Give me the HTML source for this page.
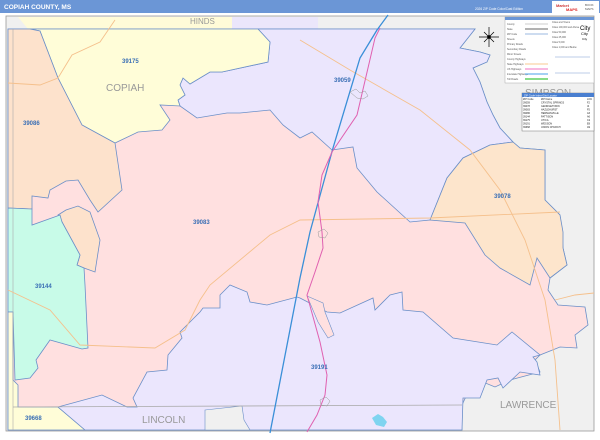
<!DOCTYPE html>
<html><head><meta charset="utf-8"><style>
html,body{margin:0;padding:0;background:#fff;}
body{width:600px;height:435px;overflow:hidden;font-family:"Liberation Sans",sans-serif;}
</style></head><body>
<svg width="600" height="435" viewBox="0 0 600 435" xmlns="http://www.w3.org/2000/svg" font-family="Liberation Sans, sans-serif">
<rect width="600" height="435" fill="#fff"/>
<rect x="0" y="0" width="600" height="13" fill="#6b96d6"/>
<text x="4" y="9" font-size="6.5" font-weight="bold" fill="#fff">COPIAH COUNTY, MS</text>
<text x="475" y="10" font-size="3.2" fill="#fff">2026 ZIP Code Color/Cast Edition</text>
<rect x="552" y="1" width="47" height="12" fill="#fff"/>
<text x="556" y="7" font-size="4" fill="#c33" font-weight="bold">Market</text>
<text x="566" y="11" font-size="4" fill="#d22" font-weight="bold">MAPS</text>
<text x="585" y="6" font-size="3" fill="#555">BOOK</text>
<text x="585" y="10" font-size="3" fill="#555">MAPS</text>
<rect x="6" y="16" width="588" height="415" fill="#f0f0f0" stroke="#999" stroke-width="0.8"/>
<polygon points="18,17 232,17 232,29 28,29" fill="#fffbd8"/>
<polygon points="232,17 318,17 318,29 232,29" fill="#ebe6fb"/>
<polygon fill="#ffe0e0" stroke="#6b8fc8" stroke-width="0.8" points="8,29 475,29 460,48 480,52 490,55 487,62 473,68 480,82 487,102 493,115 500,128 513,142 520,148 545,150 545,200 560,215 563,248 567,265 550,278 548,290 558,305 585,307 588,325 575,335 577,348 560,347 540,355 535,360 540,372 510,380 495,387 483,382 470,388 462,405 462,430 8,430"/>
<polygon fill="#ebe6fd" stroke="#6b8fc8" stroke-width="0.8" points="258,29 475,29 460,48 480,52 490,55 487,62 473,68 480,82 487,102 493,115 500,128 513,142 490,145 463,158 447,178 430,220 410,222 377,192 357,168 353,147 332,150 312,132 300,138 283,125 270,110 240,113 227,113 197,118 180,106 178,100 185,95 180,85 183,78 190,84 210,72 222,72 268,62 270,42"/>
<polygon fill="#fde5cc" stroke="#6b8fc8" stroke-width="0.8" points="513,142 520,148 545,150 545,200 560,215 563,232 563,248 567,265 550,278 537,258 530,285 500,268 485,255 465,223 430,220 447,178 463,158 490,145"/>
<polygon fill="#fffdd8" stroke="#6b8fc8" stroke-width="0.8" points="30,29 258,29 270,42 268,62 222,72 210,72 190,84 183,78 180,85 185,95 178,100 180,106 160,105 170,120 162,130 138,132 115,143 82,125 58,78 40,31"/>
<polygon fill="#fde2cc" stroke="#6b8fc8" stroke-width="0.8" points="8,29 30,29 40,31 58,78 82,125 115,143 122,190 98,212 90,200 78,180 66,181 50,190 48,198 32,196 32,209 8,208"/>
<polygon fill="#fde2cc" stroke="#6b8fc8" stroke-width="0.8" points="58,215 66,210 78,206 90,212 100,240 95,272 84,268 77,265 80,255 62,222"/>
<polygon fill="#c8fbe8" stroke="#6b8fc8" stroke-width="0.8" points="8,208 32,209 32,225 60,215 62,222 80,255 77,265 84,268 85,285 88,348 82,349 50,340 36,360 38,368 30,378 15,380 13,312 8,312"/>
<polygon fill="#fffdd8" stroke="#6b8fc8" stroke-width="0.8" points="8,312 13,312 13,380 18,385 18,407 58,407 85,430 8,430"/>
<polygon fill="#ebe6fd" stroke="#6b8fc8" stroke-width="0.8" points="58,407 102,395 127,407 137,407 133,398 147,372 167,370 168,355 182,338 180,332 200,312 203,308 220,308 220,295 230,285 247,292 250,302 267,305 297,297 300,298 327,312 340,313 373,298 375,310 390,295 402,292 403,310 423,312 453,338 497,345 512,332 540,355 533,357 537,362 540,375 520,372 503,388 498,378 487,380 480,398 463,398 462,430 85,430"/>
<polygon fill="#ffe0e0" stroke="#6b8fc8" stroke-width="0.6" points="307,296 323,303 325,312 334,335 328,338 318,322"/>
<polygon fill="#f0f0f0" stroke="#6b8fc8" stroke-width="0.6" points="205,410 242,406 244,420 250,430 205,430"/>
<line x1="13" y1="407" x2="462" y2="405" stroke="#aaa" stroke-width="0.8"/>
<line x1="13" y1="29" x2="13" y2="430" stroke="#aaa" stroke-width="0.6"/>
<path d="M372,418 l6,-4 5,3 4,5 -3,5 -8,-2z" fill="#7fd4f0"/>
<g fill="none" stroke="#f5c08c" stroke-width="0.9">
<path d="M8,83 L40,85 58,78 72,55 100,42 115,20"/>
<path d="M300,40 L350,70 420,110 470,150 500,190 525,240 545,300 555,360 560,430"/>
<path d="M8,290 L50,310 80,345 155,348 185,330 200,300 210,285 270,235 300,220 430,218 560,212"/>
<path d="M555,300 L575,295 594,293"/>
</g>
<path d="M388,15 L377,30 360,58 333,148 310,232 300,278 270,433" fill="none" stroke="#3a8fd8" stroke-width="1.3"/>
<path d="M380,28 L375,38 357,115 332,152 322,175 318,202 322,232 323,248 315,272 307,295 320,342 327,375 325,395 317,415 307,432" fill="none" stroke="#e060b0" stroke-width="1"/>
<g fill="none" stroke="#999" stroke-width="0.5">
<path d="M350,92 l6,-3 4,4 5,-2 3,5 -5,3 -6,-1z"/>
<path d="M318,232 l6,-3 4,4 -3,5 -6,-1z"/>
<path d="M320,400 l6,-3 4,4 -3,5 -6,-1z"/>
</g>
<g font-size="6" font-weight="bold" fill="#3a6fb5">
<text x="122" y="63">39175</text>
<text x="23" y="125">39086</text>
<text x="193" y="224">39083</text>
<text x="334" y="82">39059</text>
<text x="494" y="198">39078</text>
<text x="35" y="288">39144</text>
<text x="311" y="369">39191</text>
<text x="25" y="420">39668</text>
</g>
<g fill="#999">
<text x="190" y="24" font-size="8">HINDS</text>
<text x="106" y="91" font-size="10">COPIAH</text>
<text x="142" y="423" font-size="10">LINCOLN</text>
<text x="500" y="408" font-size="10">LAWRENCE</text>
<text x="525" y="96" font-size="10">SIMPSON</text>
</g>
<g transform="translate(489,37)" stroke="#000" stroke-width="0.7">
<line x1="0" y1="-10" x2="0" y2="10"/><line x1="-10" y1="0" x2="10" y2="0"/>
<line x1="-5" y1="-5" x2="5" y2="5"/><line x1="-5" y1="5" x2="5" y2="-5"/>
<circle r="1.5" fill="#000"/>
</g>
<rect x="505" y="17" width="89" height="66" fill="#fff" stroke="#aaa" stroke-width="0.5"/>
<rect x="505" y="17" width="89" height="3" fill="#6b96d6"/>
<g font-size="2.4" fill="#555">
<text x="507" y="25">County</text><text x="507" y="30">State</text><text x="507" y="35">ZIP Code</text><text x="507" y="40">Streets</text><text x="507" y="45">Primary Roads</text><text x="507" y="50">Secondary Roads</text><text x="507" y="55">Minor Streets</text><text x="507" y="60">County Highways</text><text x="507" y="65">State Highways</text><text x="507" y="70">US Highways</text><text x="507" y="75">Interstate Highways</text><text x="507" y="80">Toll Roads</text>
<text x="552" y="23">Cities and Towns</text><text x="552" y="28">Cities 100,000 and Above</text><text x="552" y="33">Cities 50,000</text><text x="552" y="38">Cities 25,000</text><text x="552" y="43">Cities 5,000</text><text x="552" y="48">Cities 1,000 and Below</text>
</g>
<g fill="none" stroke-width="1">
<line x1="525" y1="24" x2="548" y2="24" stroke="#ccc"/>
<line x1="525" y1="29" x2="548" y2="29" stroke="#666"/>
<line x1="525" y1="34" x2="548" y2="34" stroke="#9bb8e0"/>
<line x1="525" y1="64" x2="548" y2="64" stroke="#f8c890"/>
<line x1="525" y1="69" x2="548" y2="69" stroke="#f070c0"/>
<line x1="525" y1="74" x2="548" y2="74" stroke="#4aa0e8"/>
<line x1="525" y1="79" x2="548" y2="79" stroke="#60d060" stroke-width="1.5"/>
<line x1="555" y1="57" x2="590" y2="57" stroke="#7a9cd0" stroke-width="0.5"/>
<line x1="555" y1="73" x2="590" y2="73" stroke="#7a9cd0" stroke-width="0.5"/>
</g>
<text x="580" y="30" font-size="6" fill="#000">City</text>
<text x="581" y="35" font-size="4" fill="#000">City</text>
<text x="582" y="40" font-size="3" fill="#000">City</text>
<rect x="522" y="93" width="72" height="38" fill="#fff" stroke="#777" stroke-width="0.5"/>
<rect x="522" y="93" width="72" height="4" fill="#4a7fd0"/>
<text x="524" y="96.3" font-size="2.6" fill="#fff">ZIP Code Index/Grid Locator</text>
<g font-size="2.5" fill="#222">
<text x="523" y="100">ZIP Code</text><text x="541" y="100">ZIP Name</text><text x="587" y="100">LOC</text>
<text x="523" y="103.5">39059</text><text x="541" y="103.5">CRYSTAL SPRINGS</text><text x="587" y="103.5">F2</text>
<text x="523" y="107">39078</text><text x="541" y="107">GEORGETOWN</text><text x="587" y="107">I4</text>
<text x="523" y="110.5">39083</text><text x="541" y="110.5">HAZLEHURST</text><text x="587" y="110.5">F5</text>
<text x="523" y="114">39086</text><text x="541" y="114">HERMANVILLE</text><text x="587" y="114">A3</text>
<text x="523" y="117.5">39144</text><text x="541" y="117.5">PATTISON</text><text x="587" y="117.5">A6</text>
<text x="523" y="121">39175</text><text x="541" y="121">UTICA</text><text x="587" y="121">C2</text>
<text x="523" y="124.5">39191</text><text x="541" y="124.5">WESSON</text><text x="587" y="124.5">E8</text>
<text x="523" y="128">39668</text><text x="541" y="128">UNION CHURCH</text><text x="587" y="128">A9</text>
</g>
</svg>
</body></html>
